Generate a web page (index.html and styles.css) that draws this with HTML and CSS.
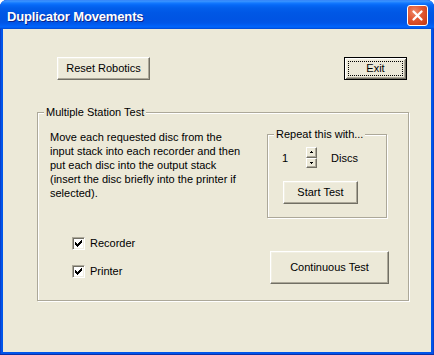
FILE: index.html
```html
<!DOCTYPE html>
<html lang="en">
<head>
<meta charset="utf-8">
<title>Duplicator Movements</title>
<link rel="stylesheet" href="styles.css">
</head>
<body>
<div class="window">
  <div class="titlebar">
    <span class="title">Duplicator Movements</span>
    <button class="close" aria-label="Close">
      <svg width="19" height="19" viewBox="0 0 19 19"><path d="M5.5 5.5L13.5 13.5M13.5 5.5L5.5 13.5" stroke="#fff" stroke-width="2.3" stroke-linecap="round" fill="none"/></svg>
    </button>
  </div>
  <div class="client">
    <div class="toprow">
      <button class="btn btn-reset">Reset Robotics</button>
      <button class="btn btn-exit"><span class="focus">Exit</span></button>
    </div>
    <fieldset class="group group-main">
      <legend>Multiple Station Test</legend>
      <div class="main-body">
        <div class="left-col">
          <p class="desc">Move each requested disc from the<br>input stack into each recorder and then<br>put each disc into the output stack<br>(insert the disc briefly into the printer if<br>selected).</p>
          <div class="checks">
            <label class="check"><span class="box"><svg width="11" height="11" viewBox="0 0 11 11" shape-rendering="crispEdges"><path d="M8 2h1v1h-1zM7 3h2v1h-2zM2 4h1v1h-1zM6 4h3v1h-3zM2 5h2v1h-2zM5 5h3v1h-3zM2 6h5v1h-5zM3 7h3v1h-3zM4 8h1v1h-1z" fill="#000"/></svg></span>Recorder</label>
            <label class="check"><span class="box"><svg width="11" height="11" viewBox="0 0 11 11" shape-rendering="crispEdges"><path d="M8 2h1v1h-1zM7 3h2v1h-2zM2 4h1v1h-1zM6 4h3v1h-3zM2 5h2v1h-2zM5 5h3v1h-3zM2 6h5v1h-5zM3 7h3v1h-3zM4 8h1v1h-1z" fill="#000"/></svg></span>Printer</label>
          </div>
        </div>
        <div class="right-col">
          <fieldset class="group group-repeat">
            <legend>Repeat this with...</legend>
            <div class="repeat-row">
              <span class="count">1</span>
              <span class="spin">
                <span class="spin-btn"><svg width="3" height="2" viewBox="0 0 3 2" shape-rendering="crispEdges"><path d="M1 0h1v1h-1zM0 1h3v1h-3z" fill="#000"/></svg></span>
                <span class="spin-btn"><svg width="3" height="2" viewBox="0 0 3 2" shape-rendering="crispEdges"><path d="M0 0h3v1h-3zM1 1h1v1h-1z" fill="#000"/></svg></span>
              </span>
              <span class="discs">Discs</span>
            </div>
            <button class="btn btn-start">Start Test</button>
          </fieldset>
          <button class="btn btn-cont">Continuous Test</button>
        </div>
      </div>
    </fieldset>
  </div>
</div>
</body>
</html>
```

FILE: styles.css
```css
* { box-sizing: border-box; }
html, body { margin: 0; padding: 0; background: #fff; }
body {
  font-family: "Liberation Sans", Arial, sans-serif;
  font-size: 11px;
  color: #000;
}
.window {
  width: 434px;
  height: 355px;
  display: flex;
  flex-direction: column;
  border-radius: 7px 7px 0 0;
  overflow: hidden;
  background: #0055EA;
  box-shadow: inset 0 -1px 0 #0A2FA8, inset 1px 0 0 #0A3FCC, inset -1px 0 0 #0A3FCC;
}
.titlebar {
  height: 29px;
  flex: none;
  display: flex;
  align-items: flex-start;
  justify-content: space-between;
  padding: 0 6px 0 7px;
  background: linear-gradient(to bottom,
    #2F7DF6 0px, #3D95FF 1px, #2A8AFF 2px, #1479FF 3px, #0669F7 5px,
    #025EEB 8px, #0057E5 13px, #0054E3 19px, #0056E8 23px,
    #005DF3 25px, #0066FD 27px, #0058EA 28px, #0046D0 29px);
}
.title {
  margin-top: 9px;
  color: #fff;
  font-weight: bold;
  font-size: 13px;
  line-height: 16px;
  letter-spacing: -0.15px;
  text-shadow: 1px 1px 0 #0B248A;
}
.close {
  margin-top: 5px;
  width: 21px;
  height: 21px;
  padding: 0;
  border: 1px solid #fff;
  border-radius: 3px;
  background: radial-gradient(circle at 35% 30%, #EE8A6A 0, #E25A35 40%, #D2441F 75%, #B93816 100%);
  display: flex;
  align-items: center;
  justify-content: center;
}
.close svg { display: block; }
.client {
  flex: 1;
  margin: 0 3px 3px;
  background: #ECE9D8;
  display: flex;
  flex-direction: column;
  align-items: flex-start;
}
.toprow {
  align-self: stretch;
  display: flex;
  justify-content: space-between;
  margin-top: 28px;
  padding: 0 24px 0 54px;
}
.btn {
  font: inherit;
  color: #000;
  background: #ECE9D8;
  border: 1px solid;
  border-color: #fff #716F64 #716F64 #fff;
  box-shadow: inset -1px -1px 0 #ACA899, inset 1px 1px 0 #F1EFE2;
  padding: 0;
  display: flex;
  align-items: center;
  justify-content: center;
  line-height: 13px;
}
.btn-reset { width: 93px; height: 23px; }
.btn-exit {
  width: 63px;
  height: 23px;
  border: 1px solid #000;
  box-shadow: inset 1px 1px 0 #fff, inset -1px -1px 0 #716F64, inset 2px 2px 0 #F1EFE2, inset -2px -2px 0 #ACA899;
  padding: 3px;
  align-items: stretch;
}
.focus {
  flex: 1;
  border: 1px dotted #000;
  display: flex;
  align-items: center;
  justify-content: center;
}
.group {
  margin: 0;
  padding: 0;
  min-width: 0;
  border: 1px solid #ACA899;
  box-shadow: 1px 1px 0 #fff, inset 1px 1px 0 #fff;
}
.group legend {
  margin-left: 6px;
  padding: 0 2px;
  line-height: 13px;
  background: #ECE9D8;
}
.group-main {
  margin: 26px 0 0 34px;
  width: 372px;
}
.main-body {
  display: flex;
  height: 181px;
}
.left-col {
  width: 229px;
  flex: none;
}
.desc {
  margin: 11px 0 0 12px;
  line-height: 14px;
  white-space: nowrap;
}
.checks {
  margin: 37px 0 0 34px;
  display: flex;
  flex-direction: column;
  gap: 15px;
}
.check {
  display: flex;
  align-items: center;
  gap: 5px;
  height: 13px;
  line-height: 13px;
}
.box {
  width: 13px;
  height: 13px;
  flex: none;
  background: #fff;
  border: 1px solid;
  border-color: #ACA899 #fff #fff #ACA899;
  box-shadow: inset 1px 1px 0 #716F64, inset -1px -1px 0 #F1EFE2;
}
.box svg { display: block; }
.right-col {
  display: flex;
  flex-direction: column;
  align-items: flex-start;
}
.group-repeat {
  margin-top: 9px;
  width: 120px;
  padding-bottom: 13px;
}
.repeat-row {
  display: flex;
  align-items: center;
  height: 21px;
  margin-top: 6px;
  padding-left: 14px;
}
.count { width: 6px; }
.spin {
  margin-left: 18px;
  width: 11px;
  height: 21px;
  display: flex;
  flex-direction: column;
}
.spin-btn {
  flex: 1;
  background: #ECE9D8;
  border: 1px solid;
  border-color: #fff #716F64 #716F64 #fff;
  box-shadow: inset -1px -1px 0 #ACA899;
  display: flex;
  align-items: center;
  justify-content: center;
}
.spin-btn svg { display: block; }
.discs { margin-left: 14px; }
.btn-start {
  margin: 13px 0 0 15px;
  width: 75px;
  height: 23px;
}
.btn-cont {
  margin: 33px 0 0 3px;
  width: 119px;
  height: 33px;
}
```
